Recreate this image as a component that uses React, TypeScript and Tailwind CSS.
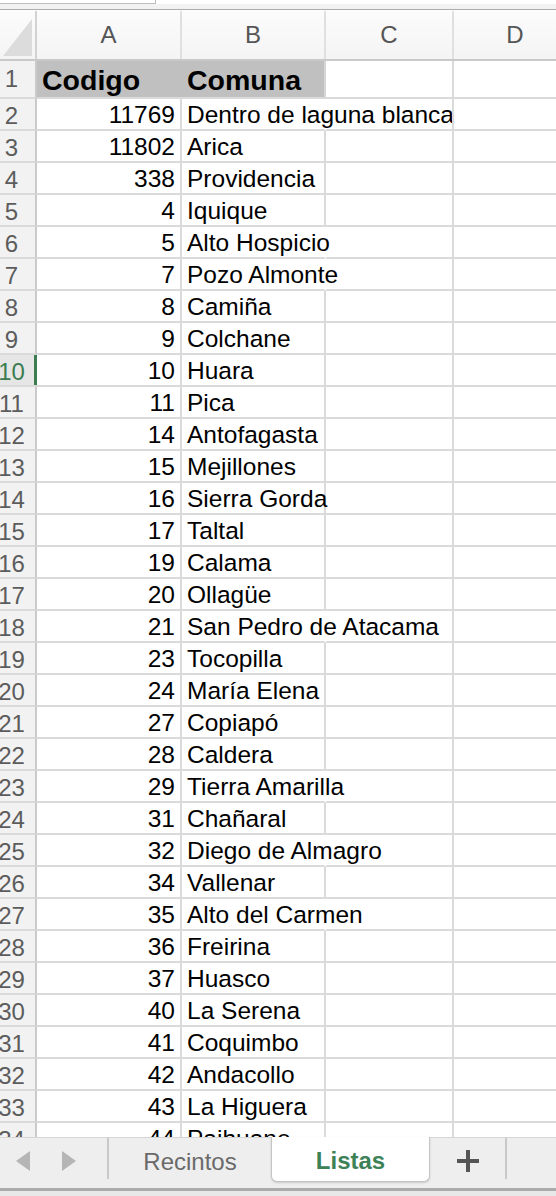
import React from 'react';

type Row = { code: string; name: string; spill?: boolean };

const rows: Row[] = [
  { code: '11769', name: 'Dentro de laguna blanca', spill: true },
  { code: '11802', name: 'Arica' },
  { code: '338', name: 'Providencia' },
  { code: '4', name: 'Iquique' },
  { code: '5', name: 'Alto Hospicio', spill: true },
  { code: '7', name: 'Pozo Almonte', spill: true },
  { code: '8', name: 'Camiña' },
  { code: '9', name: 'Colchane' },
  { code: '10', name: 'Huara' },
  { code: '11', name: 'Pica' },
  { code: '14', name: 'Antofagasta' },
  { code: '15', name: 'Mejillones' },
  { code: '16', name: 'Sierra Gorda' },
  { code: '17', name: 'Taltal' },
  { code: '19', name: 'Calama' },
  { code: '20', name: 'Ollagüe' },
  { code: '21', name: 'San Pedro de Atacama', spill: true },
  { code: '23', name: 'Tocopilla' },
  { code: '24', name: 'María Elena' },
  { code: '27', name: 'Copiapó' },
  { code: '28', name: 'Caldera' },
  { code: '29', name: 'Tierra Amarilla', spill: true },
  { code: '31', name: 'Chañaral' },
  { code: '32', name: 'Diego de Almagro', spill: true },
  { code: '34', name: 'Vallenar' },
  { code: '35', name: 'Alto del Carmen', spill: true },
  { code: '36', name: 'Freirina' },
  { code: '37', name: 'Huasco' },
  { code: '40', name: 'La Serena' },
  { code: '41', name: 'Coquimbo' },
  { code: '42', name: 'Andacollo' },
  { code: '43', name: 'La Higuera' },
  { code: '44', name: 'Paihuano' },
];

const SELECTED_ROW = 10;

function RowLabel({ n, tall }: { n: number; tall?: boolean }) {
  const selected = n === SELECTED_ROW;
  return (
    <div
      className={`relative flex w-[37px] shrink-0 border-b-2 border-r-2 border-b-[#dadada] border-r-[#cacaca] text-[24px] ${
        tall ? 'h-[38px] pt-[3px]' : 'h-[32px] pt-[2px]'
      } ${selected ? 'bg-[#e6e6e6] text-[#3b7d50]' : 'bg-[#f2f2f2] text-[#5c5c5c]'}`}
    >
      <div className="flex w-[23px] justify-center leading-[30px]">{n}</div>
      {selected && <div className="absolute -right-[2px] top-0 h-[30px] w-[3px] bg-[#3b7d50]" />}
    </div>
  );
}

export default function App() {
  return (
    <div className="flex h-[1196px] w-[556px] flex-col overflow-hidden bg-white font-['Liberation_Sans',Arial,Helvetica,sans-serif] text-[24.5px] text-black">
      {/* strip above the sheet */}
      <div className="flex h-[10px] shrink-0 border-b border-[#acacac] bg-[#f2f2f2]">
        <div className="h-[4px] w-[156px] border-b border-r border-[#bdbdbd] bg-white" />
        <div className="h-[4px] flex-1 bg-white" />
      </div>

      {/* column letters */}
      <div className="flex h-[51px] shrink-0 border-b-2 border-[#c9c9c9] bg-gradient-to-b from-[#fcfcfc] to-[#f4f4f4] pt-[1px] text-[24px] text-[#555555]">
        <div className="relative w-[37px] shrink-0 border-r-2 border-[#d2d2d2]">
          <svg className="absolute left-0 top-0" width="35" height="49" viewBox="0 0 35 49">
            <polygon points="3,45 32,45 32,8" fill="#dcdcdc" />
          </svg>
        </div>
        <div className="flex w-[145px] shrink-0 items-center justify-center border-r-2 border-[#e0e0e0]">A</div>
        <div className="flex w-[144px] shrink-0 items-center justify-center border-r-2 border-[#e0e0e0]">B</div>
        <div className="flex w-[128px] shrink-0 items-center justify-center border-r-2 border-[#e0e0e0]">C</div>
        <div className="flex w-[124px] shrink-0 items-center justify-center border-r-2 border-[#e0e0e0]">D</div>
      </div>

      {/* cells */}
      <div className="min-h-0 flex-1 overflow-hidden">
        <div className="flex">
          <RowLabel n={1} tall />
          <div className="h-[38px] w-[145px] shrink-0 border-b-2 border-[#dadada] bg-[#c0c0c0] pl-[5px] pt-[2px] text-[28.5px] font-bold leading-[34px]">
            Codigo
          </div>
          <div className="h-[38px] w-[144px] shrink-0 border-b-2 border-r-2 border-b-[#dadada] border-r-[#d6d6d6] bg-[#c0c0c0] pl-[5px] pt-[2px] text-[28.5px] font-bold leading-[34px]">
            Comuna
          </div>
          <div className="h-[38px] w-[128px] shrink-0 border-b-2 border-r-2 border-[#dadada]" />
          <div className="h-[38px] w-[124px] shrink-0 border-b-2 border-r-2 border-[#dadada]" />
        </div>

        {rows.map((r, i) => (
          <div key={i} className="flex">
            <RowLabel n={i + 2} />
            <div className="h-[32px] w-[145px] shrink-0 border-b-2 border-r-2 border-[#dadada] pr-[5px] pt-[2px] text-right leading-[28px]">
              {r.code}
            </div>
            <div
              className={`h-[32px] w-[144px] shrink-0 whitespace-nowrap border-b-2 border-r-2 border-b-[#dadada] pl-[5px] pt-[2px] leading-[28px] ${
                r.spill ? 'border-r-transparent' : 'border-r-[#dadada]'
              }`}
            >
              {r.name}
            </div>
            <div className="h-[32px] w-[128px] shrink-0 border-b-2 border-r-2 border-[#dadada]" />
            <div className="h-[32px] w-[124px] shrink-0 border-b-2 border-r-2 border-[#dadada]" />
          </div>
        ))}
      </div>

      {/* sheet tabs */}
      <div className="flex h-[51px] shrink-0 items-start border-t border-[#d6d6d6] bg-[#eeeeee] text-[24px]">
        <div className="flex h-[46px] w-[107px] shrink-0 items-center">
          <svg className="ml-[16px]" width="14" height="20" viewBox="0 0 14 20">
            <polygon points="14,0 14,20 0,10" fill="#b5b5b5" />
          </svg>
          <svg className="ml-[32px]" width="14" height="20" viewBox="0 0 14 20">
            <polygon points="0,0 0,20 14,10" fill="#b5b5b5" />
          </svg>
        </div>
        <div className="h-[41px] w-[2px] shrink-0 bg-[#c8c8c8]" />
        <div className="flex h-[48px] w-[162px] shrink-0 items-center justify-center text-[#6a6a6a]">Recintos</div>
        <div className="-mt-px flex h-[45px] w-[159px] shrink-0 items-center justify-center rounded-b-[6px] border border-t-0 border-[#c4c4c4] bg-white pt-[3px] font-bold text-[#3d8157] shadow-[0_1px_2px_rgba(0,0,0,0.15)]">
          Listas
        </div>
        <div className="flex h-[46px] w-[75px] shrink-0 items-center justify-center">
          <svg width="22" height="22" viewBox="0 0 22 22">
            <rect x="0" y="9" width="22" height="4" fill="#555555" />
            <rect x="9" y="0" width="4" height="22" fill="#555555" />
          </svg>
        </div>
        <div className="h-[41px] w-[2px] shrink-0 bg-[#c8c8c8]" />
      </div>
      <div className="h-[8px] shrink-0 border-t-[3px] border-[#ababab] bg-[#e8e8e8]" />
    </div>
  );
}
